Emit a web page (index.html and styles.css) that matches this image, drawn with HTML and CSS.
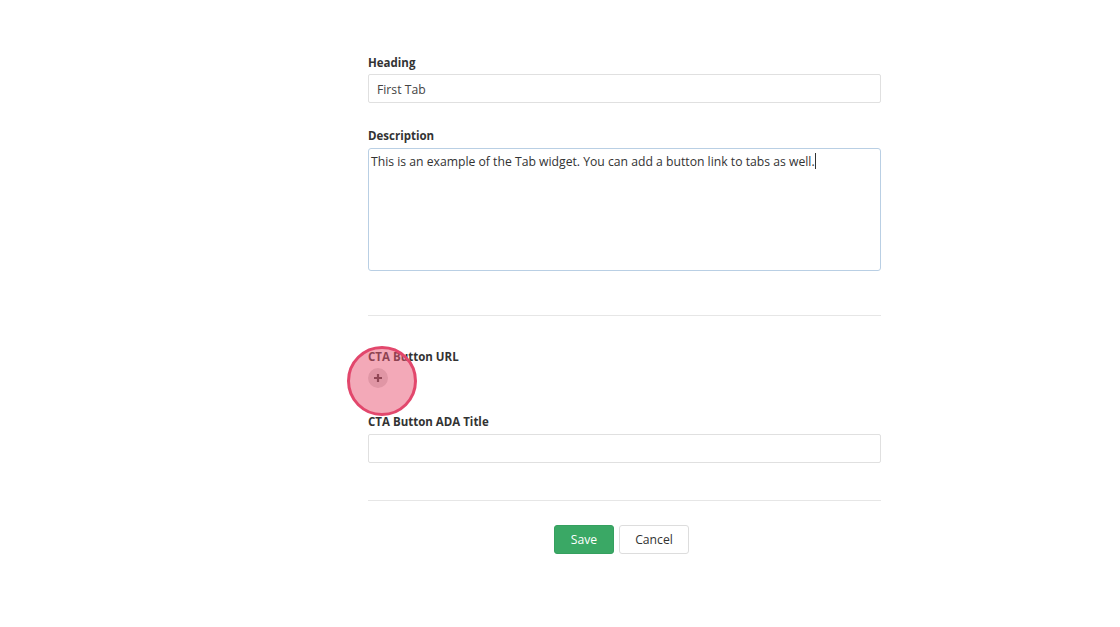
FILE: index.html
```html
<!DOCTYPE html>
<html>
<head>
<meta charset="utf-8">
<link rel="stylesheet" href="styles.css">
</head>
<body>
<div class="form">
  <div class="field">
    <label class="label">Heading</label>
    <div class="input">First Tab</div>
  </div>
  <div class="field field-desc">
    <label class="label">Description</label>
    <div class="textarea">This is an example of the Tab widget. You can add a button link to tabs as well.<span class="caret"></span></div>
  </div>
  <hr class="divider divider-1">
  <div class="field field-url">
    <label class="label">CTA Button URL</label>
    <div class="add-wrap">
      <span class="add-btn"><svg width="10" height="10" viewBox="0 0 10 10"><path d="M5 1v8M1 5h8" stroke="#3a3a3a" stroke-width="2.2" fill="none"/></svg></span>
      <span class="click-ring"></span>
    </div>
  </div>
  <div class="field field-ada">
    <label class="label">CTA Button ADA Title</label>
    <div class="input"></div>
  </div>
  <hr class="divider divider-2">
  <div class="actions">
    <button class="btn btn-save">Save</button>
    <button class="btn btn-cancel">Cancel</button>
  </div>
</div>
</body>
</html>
```
FILE: styles.css
```css
html, body {
  margin: 0;
  padding: 0;
  background: #ffffff;
}
body {
  font-family: "Open Sans", "Liberation Sans", sans-serif;
  color: #333333;
  width: 1120px;
  height: 627px;
  overflow: hidden;
}
.form {
  width: 513px;
  margin-left: 368px;
  padding-top: 54px;
  display: flex;
  flex-direction: column;
}
.label {
  display: block;
  font-size: 11.5px;
  font-weight: 700;
  line-height: 17px;
  color: #333333;
  margin-bottom: 3px;
}
.input {
  box-sizing: border-box;
  height: 29px;
  border: 1px solid #e0e0e0;
  border-radius: 2px;
  padding: 1px 8px 0;
  font-size: 12.2px;
  line-height: 27px;
  color: #444444;
}
.field-desc {
  margin-top: 24px;
}
.field-desc .label {
  margin-bottom: 4px;
}
.textarea {
  box-sizing: border-box;
  height: 123px;
  border: 1px solid #b9cfe4;
  border-radius: 3px;
  padding: 3px 2px 1px;
  font-size: 12.2px;
  line-height: 20px;
  color: #333333;
}
.caret {
  display: inline-block;
  width: 1px;
  height: 16px;
  background: #333;
  vertical-align: -3px;
}
.divider {
  border: 0;
  border-top: 1px solid #e6e6e6;
  margin: 0;
  width: 513px;
}
.divider-1 {
  margin-top: 44px;
}
.field-url {
  margin-top: 32px;
}
.add-wrap {
  position: relative;
  height: 20px;
  margin-top: 2px;
}
.add-btn {
  display: flex;
  align-items: center;
  justify-content: center;
  width: 20px;
  height: 20px;
  border-radius: 50%;
  background: #d9d9d9;
}
.add-btn svg {
  display: block;
}
.click-ring {
  position: absolute;
  left: -21px;
  top: -22px;
  width: 64px;
  height: 64px;
  border-radius: 50%;
  border: 3px solid #e2476c;
  background: rgba(232, 84, 114, 0.5);
}
.field-ada {
  margin-top: 25px;
}
.field-ada .label {
  margin-bottom: 4px;
}
.divider-2 {
  margin-top: 37px;
}
.actions {
  display: flex;
  justify-content: center;
  gap: 5px;
  margin-top: 24px;
  padding-right: 6px;
}
.btn {
  box-sizing: border-box;
  height: 29px;
  border-radius: 3px;
  font-family: "Open Sans", "Liberation Sans", sans-serif;
  font-size: 12.2px;
  padding: 0 10px;
  cursor: pointer;
}
.btn-save {
  width: 60px;
  background: #3aa865;
  border: 1px solid #35a05f;
  color: #ffffff;
}
.btn-cancel {
  width: 70px;
  background: #ffffff;
  border: 1px solid #dddddd;
  color: #333333;
}
```
